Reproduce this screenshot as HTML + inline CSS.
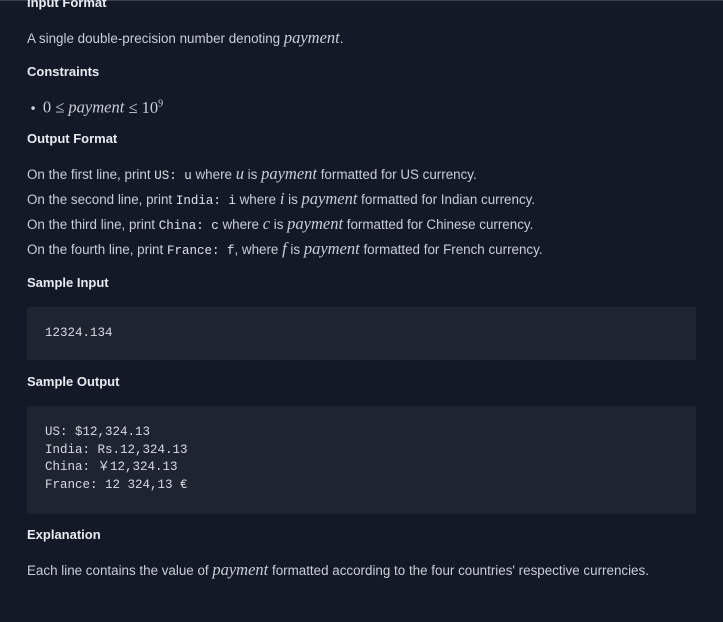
<!DOCTYPE html>
<html><head><meta charset="utf-8"><style>
body{margin:0;width:723px;height:622px;background:#131927;overflow:hidden;font-family:"Liberation Sans",sans-serif;color:#c9ced6;position:relative}
.t{position:absolute;left:27px;font-size:13.4px;line-height:16px;white-space:nowrap;letter-spacing:0}
.h{font-weight:bold;color:#e8ebf0;font-size:13px}
.m{font-family:"Liberation Serif",serif;font-style:italic;font-size:16.5px}
.r{font-family:"Liberation Serif",serif;font-size:16.5px}
code{font-family:"Liberation Mono",monospace;font-size:12.5px;color:#dfe3ea;letter-spacing:0}
.box{position:absolute;left:27px;width:669px;background:#1f2431}
.pre{position:absolute;left:45px;font-family:"Liberation Mono",monospace;font-size:12.5px;color:#d6dae2;line-height:17.7px;white-space:pre}
.top{position:absolute;left:0;top:0;width:723px;height:1px;background:#3a4050}
</style></head><body>
<div class="top"></div>
<div class="t h" style="top:-5px">Input Format</div>
<div class="t" style="top:30px">A single double-precision number denoting <span class="m">payment</span>.</div>
<div class="t h" style="top:64px">Constraints</div>
<div class="t" style="top:96px">&nbsp;•&nbsp; <span class="r">0 ≤ </span><span class="m">payment</span><span class="r"> ≤ 10<sup style="font-size:10px">9</sup></span></div>
<div class="t h" style="top:131px">Output Format</div>
<div class="t" style="top:166px">On the first line, print <code>US: u</code> where <span class="m">u</span> is <span class="m">payment</span> formatted for US currency.</div>
<div class="t" style="top:191px">On the second line, print <code>India: i</code> where <span class="m">i</span> is <span class="m">payment</span> formatted for Indian currency.</div>
<div class="t" style="top:216px">On the third line, print <code>China: c</code> where <span class="m">c</span> is <span class="m">payment</span> formatted for Chinese currency.</div>
<div class="t" style="top:241px">On the fourth line, print <code>France: f</code>, where <span class="m">f</span> is <span class="m">payment</span> formatted for French currency.</div>
<div class="t h" style="top:275px">Sample Input</div>
<div class="box" style="top:307px;height:53px"></div>
<div class="pre" style="top:325px">12324.134</div>
<div class="t h" style="top:374px">Sample Output</div>
<div class="box" style="top:406px;height:108px"></div>
<div class="pre" style="top:424px">US: $12,324.13
India: Rs.12,324.13
China: ￥12,324.13
France: 12 324,13 €</div>
<div class="t h" style="top:527px">Explanation</div>
<div class="t" style="top:562px">Each line contains the value of <span class="m">payment</span> formatted according to the four countries' respective currencies.</div>
</body></html>
